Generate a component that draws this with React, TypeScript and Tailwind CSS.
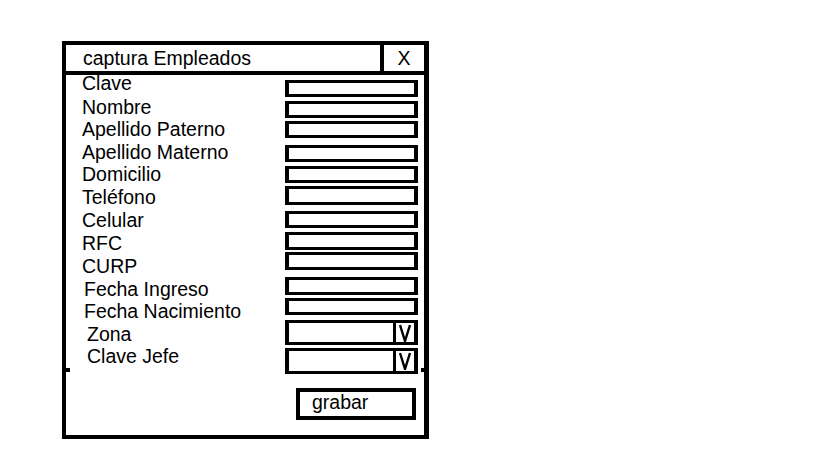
import React from 'react';

type Field = {
  label: string;
  labelClass: string;
  boxClass: string;
  select?: boolean;
};

// offsets follow the wireframe, rows are not evenly spaced
const fields: Field[] = [
  { label: 'Clave', labelClass: 'h-[24px] pl-[16px]', boxClass: 'mt-[5px] h-[17px]' },
  { label: 'Nombre', labelClass: 'h-[22px] pl-[16px]', boxClass: 'mt-[4px] h-[17px]' },
  { label: 'Apellido Paterno', labelClass: 'h-[23px] pl-[16px]', boxClass: 'mt-[3px] h-[17px]' },
  { label: 'Apellido Materno', labelClass: 'h-[22px] pl-[16px]', boxClass: 'mt-[7px] h-[17px]' },
  { label: 'Domicilio', labelClass: 'h-[23px] pl-[16px]', boxClass: 'mt-[4px] h-[17px]' },
  { label: 'Teléfono', labelClass: 'h-[23px] pl-[16px]', boxClass: 'mt-[3px] h-[19px]' },
  { label: 'Celular', labelClass: 'h-[24px] pl-[16px]', boxClass: 'mt-[6px] h-[17px]' },
  { label: 'RFC', labelClass: 'h-[23px] pl-[16px]', boxClass: 'mt-[4px] h-[18px]' },
  { label: 'CURP', labelClass: 'h-[23px] pl-[16px]', boxClass: 'mt-[2px] h-[18px]' },
  { label: 'Fecha Ingreso', labelClass: 'h-[22px] pl-[18px]', boxClass: 'mt-[7px] h-[18px]' },
  { label: 'Fecha Nacimiento', labelClass: 'h-[23px] pl-[18px]', boxClass: 'mt-[3px] h-[17px]' },
  { label: 'Zona', labelClass: 'h-[22px] pl-[21px]', boxClass: 'mt-[5px] h-[25px]', select: true },
  { label: 'Clave Jefe', labelClass: 'h-[23px] pl-[21px]', boxClass: 'mt-[3px] h-[26px]', select: true },
];

const DropArrow = () => (
  <svg width="12" height="18" viewBox="0 0 12 18" fill="none">
    <polyline points="1,1 6,17 11,1" stroke="black" strokeWidth="2.4" strokeLinejoin="miter" />
  </svg>
);

const App = () => {
  return (
    <div className="min-h-[460px] w-[819px] bg-white pt-[41px] pl-[62px] font-['Liberation_Sans',Arial,sans-serif] text-[19.5px] text-black">
      <div className="flex h-[398px] w-[367px] flex-col border-t-4 border-b-4 border-l-4 border-r-[5px] border-black">
        {/* title bar */}
        <div className="flex h-[30px] shrink-0 border-b-4 border-black">
          <div className="w-[314px] pl-[17px] leading-[26px]">captura Empleados</div>
          <div className="w-[4px] bg-black" />
          <div className="flex-1 text-center leading-[26px]">X</div>
        </div>

        {/* fields */}
        <div className="flex h-[293px] shrink-0">
          <div className="-mt-[3px] flex w-[219px] flex-col">
            {fields.map((f) => (
              <div key={f.label} className={`${f.labelClass} leading-[23px] whitespace-nowrap`}>
                {f.label}
              </div>
            ))}
          </div>
          <div className="flex w-[133px] flex-col">
            {fields.map((f) => (
              <div
                key={f.label}
                className={`${f.boxClass} flex shrink-0 border-x-4 border-y-[3px] border-black`}
              >
                {f.select && (
                  <>
                    <div className="flex-1" />
                    <div className="flex w-[21px] items-center justify-center border-l-[3px] border-black">
                      <DropArrow />
                    </div>
                  </>
                )}
              </div>
            ))}
          </div>
        </div>

        {/* bottom part */}
        <div className="flex flex-1 flex-col">
          <div className="flex h-[4px] justify-between">
            <div className="w-[4px] bg-black" />
            <div className="w-[3px] bg-black" />
          </div>
          <div className="mt-[16px] ml-[230px] h-[32px] w-[120px] border-4 border-black pl-[12px] leading-[20px]">
            grabar
          </div>
        </div>
      </div>
    </div>
  );
};

export default App;
